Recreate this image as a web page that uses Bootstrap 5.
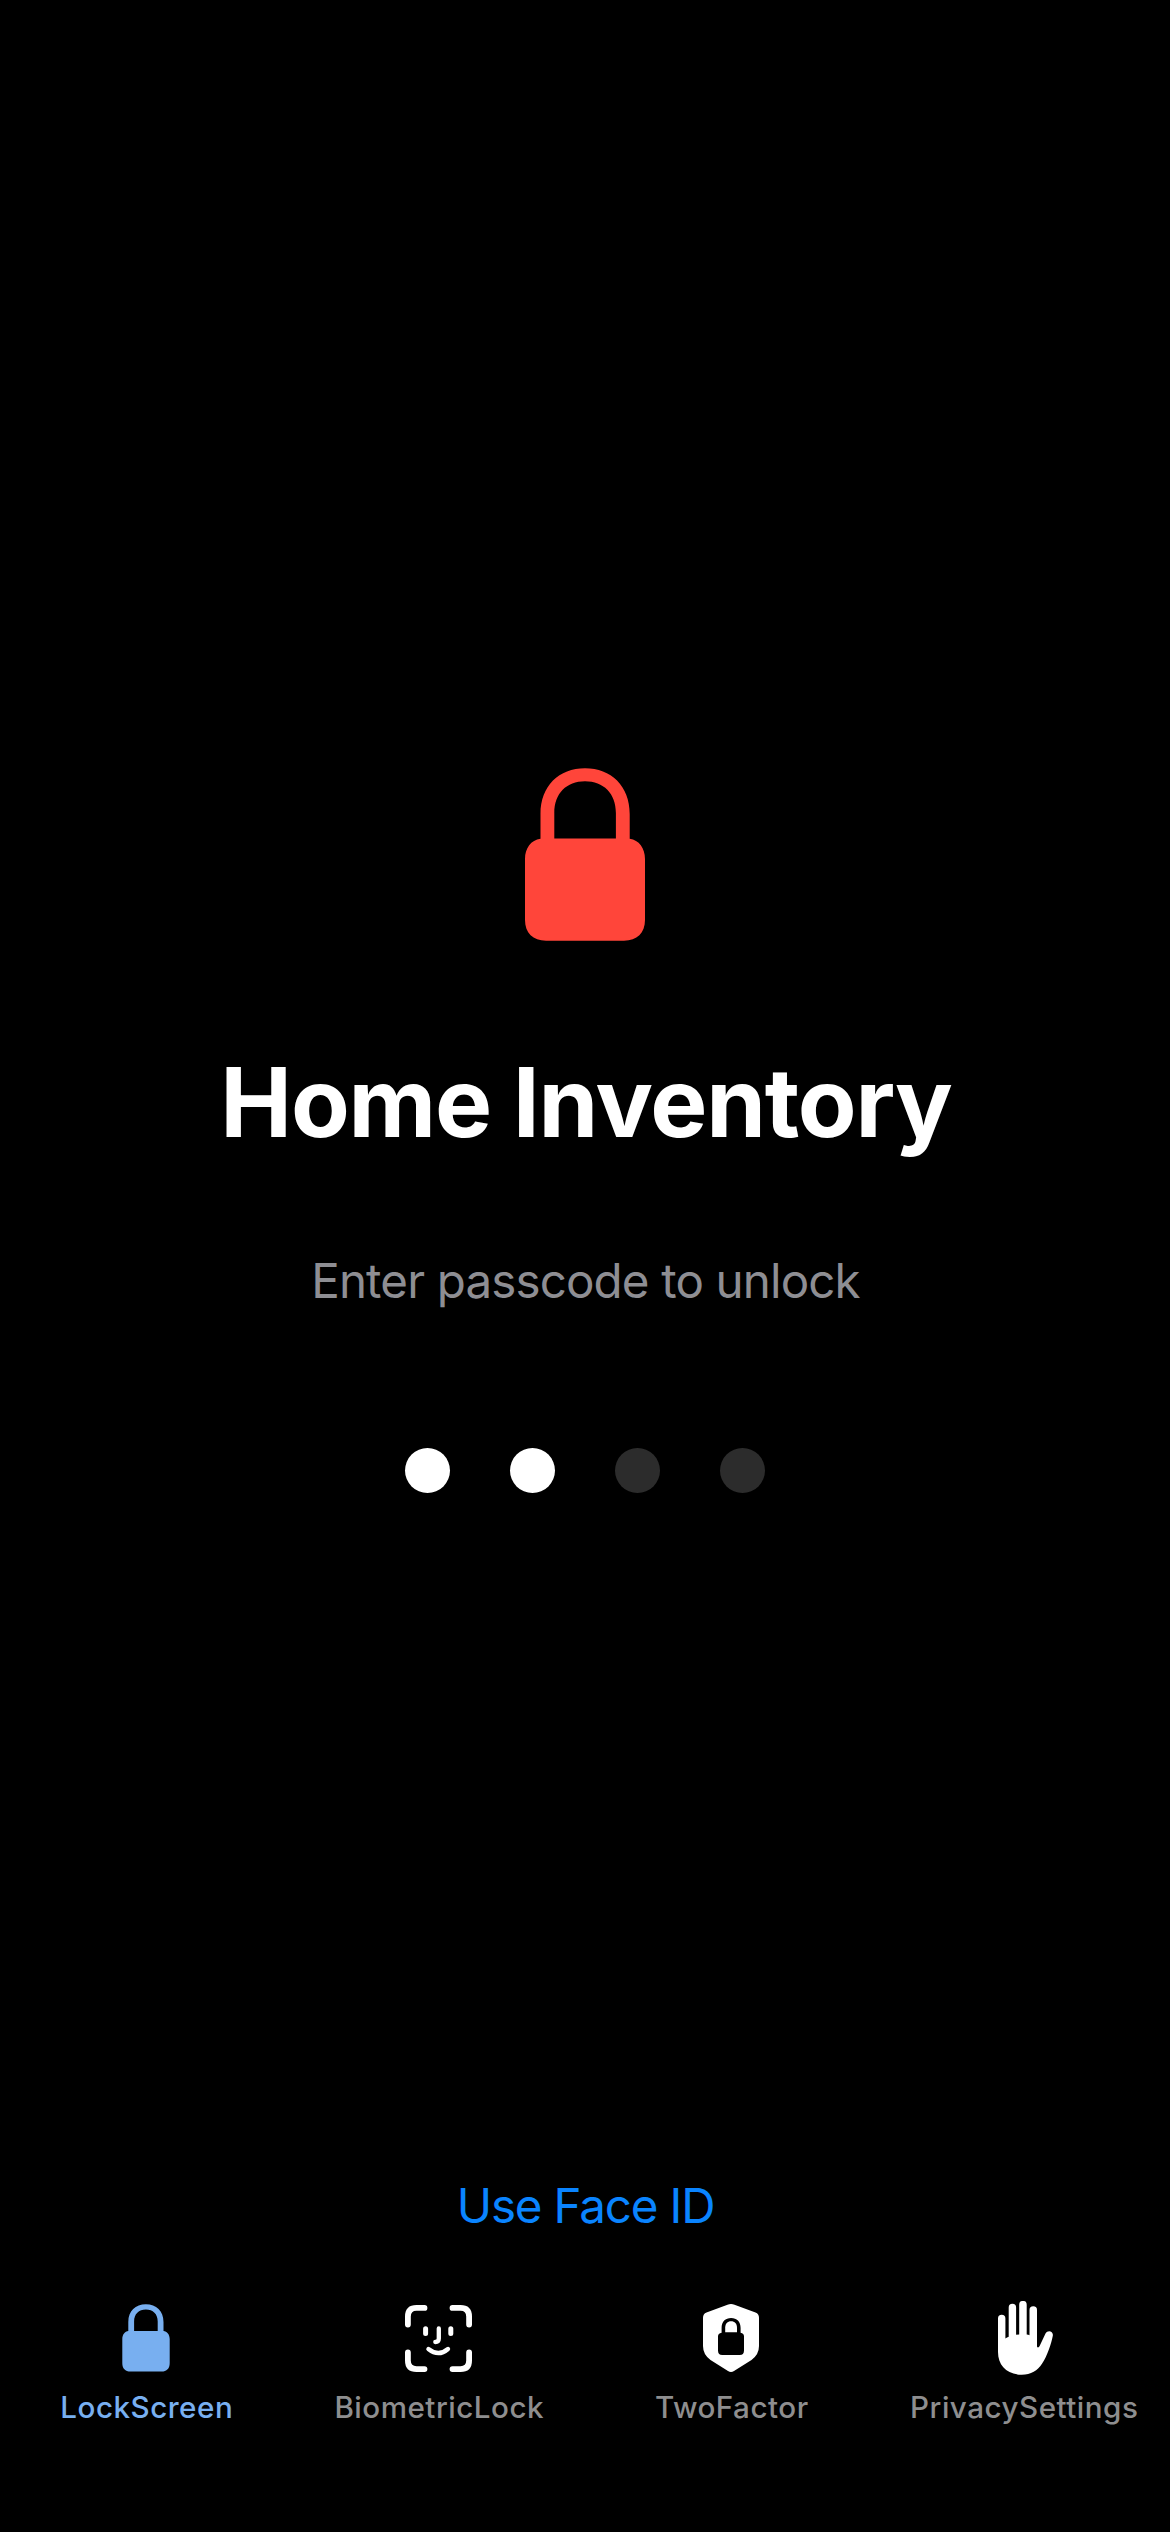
<!DOCTYPE html>
<html lang="en">
<head>
<meta charset="utf-8">
<meta name="viewport" content="width=device-width, initial-scale=1">
<title>Home Inventory</title>
<link href="https://cdn.jsdelivr.net/npm/bootstrap@5.3.0/dist/css/bootstrap.min.css" rel="stylesheet">
<style>
  body { background: #000; color: #fff; font-family: Inter, "Liberation Sans", sans-serif; height: 2532px; }
  svg { display: block; }
  .unlock-panel { padding-top: 768px; }
  .hero-lock { color: #ff453a; }
  .app-title { font-size: 96px; line-height: 116px; font-weight: 700; letter-spacing: -1.150px; padding-left: 2px; margin-top: 103px; }
  .hint { font-size: 47.500px; line-height: 58px; color: #8e8e93; margin-top: 92px; padding-left: 1px; letter-spacing: -.85px; }
  .dots { gap: 60px; margin-top: 138px; }
  .dot { width: 45px; height: 45px; background: #2c2c2c; }
  .dot.filled { background: #fff; }
  .face-link { font-size: 47.500px; line-height: 58px; color: #0a84ff; letter-spacing: -1.150px; padding-left: 1px; margin-bottom: 57px; }
  .tabs { height: 240px; }
  .tab-link { color: #fff; }
  .tab-link.active { color: #78aff0; }
  .tab-icon { height: 74px; margin-top: 9px; }
  .hand-icon { padding-left: 4px; }
  .tab-label { font-size: 29.600px; line-height: 36px; font-weight: 500; letter-spacing: .5px; color: #8e8e8f; margin-top: 14px; padding-left: 1px; white-space: nowrap; }
  .active .tab-label { color: inherit; }
</style>
<script src="https://cdn.jsdelivr.net/npm/bootstrap@5.3.0/dist/js/bootstrap.bundle.min.js"></script>
</head>
<body class="d-flex flex-column overflow-hidden">
<main class="unlock-panel flex-grow-1 d-flex flex-column align-items-center text-center">
  <svg class="hero-lock" width="120" height="173" viewBox="0 0 120 173" fill="currentColor" aria-hidden="true">
    <path d="M15.5 70.7V46C15.5 18 34 .3 60 .3S104.700 18 104.700 46V70.700C114 72 120 80 120 91V152C120 165 112 172.700 99 172.700H21C8 172.700 0 165 0 152V91C0 80 6 72 15.500 70.700ZM29.300 70.500H90.900V45C90.900 25.500 78.500 13.300 60 13.300S29.300 25.500 29.300 45Z"/>
  </svg>
  <h1 class="app-title mb-0">Home Inventory</h1>
  <p class="hint mb-0">Enter passcode to unlock</p>
  <div class="dots d-flex">
    <span class="dot filled rounded-circle"></span>
    <span class="dot filled rounded-circle"></span>
    <span class="dot rounded-circle"></span>
    <span class="dot rounded-circle"></span>
  </div>
  <a href="#" class="face-link mt-auto text-decoration-none">Use Face ID</a>
</main>
<nav class="tabs row g-0 flex-shrink-0 text-center">
  <a href="#" class="tab-link active col-3 d-flex flex-column align-items-center text-decoration-none">
    <span class="tab-icon d-flex align-items-center">
      <svg width="48" height="68" viewBox="0 0 48 68" fill="currentColor"><path d="M6.300 27V18C6.300 7 13.500.3 23.900.3S41.500 7 41.500 18V27C45 27.400 47.700 30.500 47.700 35V59C47.700 64.500 44.800 67.600 39.500 67.600H8.500C3.200 67.600.3 64.500.3 59V35C.3 30.500 3 27.400 6.300 27ZM12.100 26.900H35.700V17.500C35.700 10 31 5.600 23.900 5.600S12.100 10 12.100 17.500Z"/></svg>
    </span>
    <span class="tab-label">LockScreen</span>
  </a>
  <a href="#" class="tab-link col-3 d-flex flex-column align-items-center text-decoration-none">
    <span class="tab-icon d-flex align-items-center">
      <svg width="67" height="67" viewBox="0 0 67 67" fill="none" stroke="currentColor" stroke-linecap="round" stroke-linejoin="round">
        <path stroke-width="5.800" d="M2.900 19.500V11.500Q2.900 2.900 11.500 2.900H19.500M47.500 2.900H55.500Q64.100 2.900 64.100 11.500V19.500M64.100 47.500V55.500Q64.100 64.100 55.500 64.100H47.500M19.500 64.100H11.500Q2.900 64.100 2.900 55.500V47.500"/>
        <path stroke-width="5" d="M20.600 23.800V28.600M45.800 23.800V28.600"/>
        <path stroke-width="4.300" d="M33.800 23.500V33.500Q33.800 37 30.300 37M23.400 44Q33.500 52.200 43 44"/>
      </svg>
    </span>
    <span class="tab-label">BiometricLock</span>
  </a>
  <a href="#" class="tab-link col-3 d-flex flex-column align-items-center text-decoration-none">
    <span class="tab-icon d-flex align-items-center">
      <svg width="56" height="68" viewBox="0 0 56 68">
        <path fill="currentColor" d="M24.500.8Q28-.6 31.500.8L52.500 8.600Q56 10 56 13.700V42Q56 50.500 48.500 56L31 67Q28 69 25 67L7.500 56Q0 50.500 0 42V13.700Q0 10 3.500 8.600Z"/>
        <path fill="#000" d="M18.600 28.800V24C18.600 17.500 22.400 14 28.100 14S37.600 17.500 37.600 24V28.800Q41 29.200 41 32.500V46.500Q41 51 36.700 51H19.300Q15 51 15 46.500V32.500Q15 29.200 18.600 28.800Z"/>
        <path fill="currentColor" d="M22.200 28.300V23.500C22.200 19.500 24.500 17.200 28.100 17.200S34 19.500 34 23.500V28.300Z"/>
      </svg>
    </span>
    <span class="tab-label">TwoFactor</span>
  </a>
  <a href="#" class="tab-link col-3 d-flex flex-column align-items-center text-decoration-none">
    <span class="tab-icon hand-icon d-flex align-items-center">
      <svg width="55" height="74" viewBox="0 0 55 74" fill="currentColor"><path d="M0 51V17.400a3.700 3.700 0 0 1 7.400 0V37.600Q9 36.300 10.700 35.700V6.500a3.700 3.700 0 0 1 7.400 0V33.800L21.200 33.500V3.700a3.750 3.750 0 0 1 7.500 0V33.600Q30.500 33.800 31.500 34.300V9a3.750 3.750 0 0 1 7.500 0V45.500C39.300 46.800 40.800 46.800 41.500 45.300L47.500 32.600C49.800 28.200 55.600 30.200 54.800 34.700C53.500 42 49 55.500 44.300 62.300C39.500 70 33 73.700 23.700 73.700C9 73.700 0 64.500 0 51Z"/></svg>
    </span>
    <span class="tab-label">PrivacySettings</span>
  </a>
</nav>
</body>
</html>
